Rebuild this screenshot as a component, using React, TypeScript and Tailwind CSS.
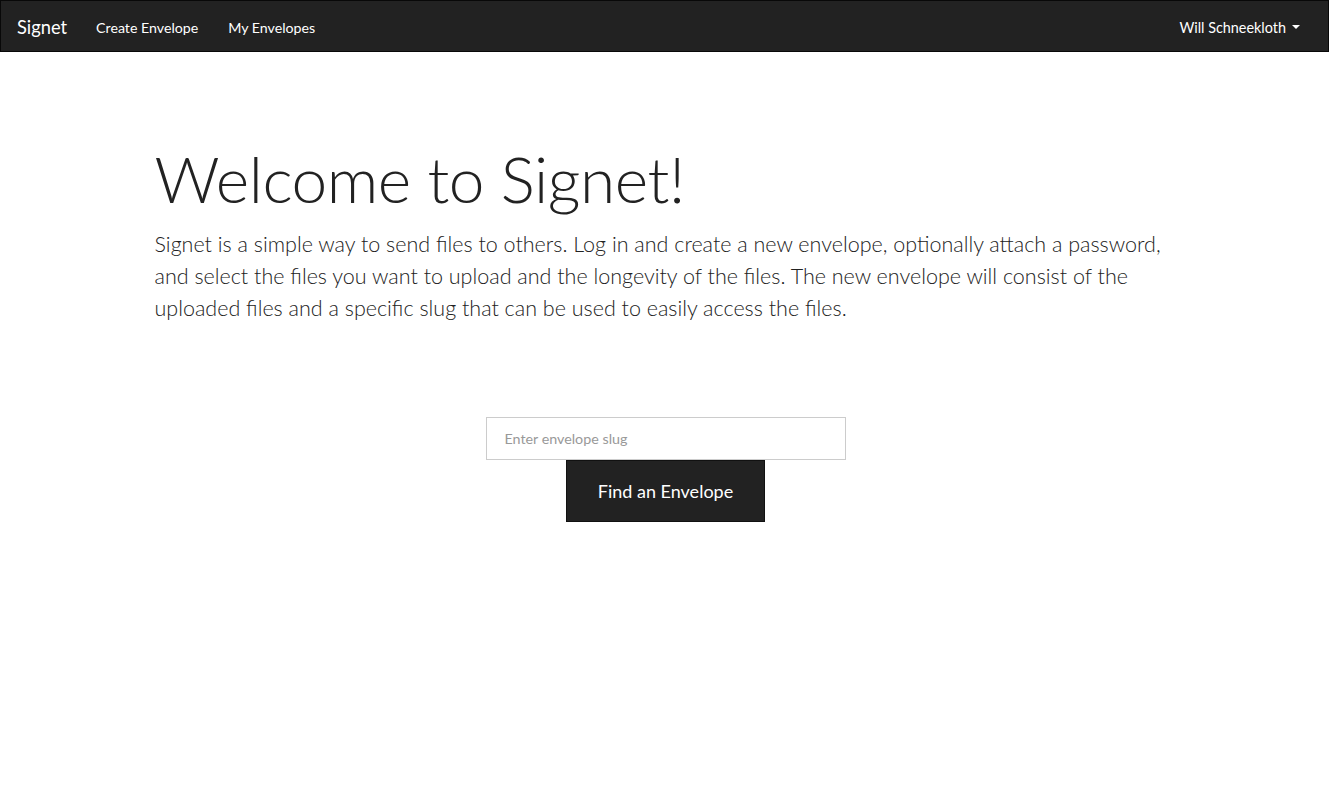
import React from "react";

const font = { fontFamily: "Lato, 'Open Sans', sans-serif" };

function Navbar() {
  return (
    <nav className="h-[52px] bg-[#222] border border-[#080808] flex items-center justify-between text-white">
      <div className="flex items-center h-full pt-[3px]">
        <a className="pl-[16px] pr-[14px] text-[18.3px] text-white">Signet</a>
        <a className="px-[15px] text-[14.2px] text-white">Create Envelope</a>
        <a className="px-[15px] text-[14.2px] text-white">My Envelopes</a>
      </div>
      <div className="flex items-center pt-[3px] pr-[28px] text-[14.4px]">
        <span>Will Schneekloth</span>
        <span className="ml-[6px] w-0 h-0 border-l-[4px] border-r-[4px] border-t-[4px] border-l-transparent border-r-transparent border-t-white" />
      </div>
    </nav>
  );
}

export default function App() {
  return (
    <div className="min-h-[807px] bg-white text-[#222]" style={font}>
      <Navbar />
      <main className="w-[1170px] mx-auto px-[15px]">
        <div className="px-[60px] pt-[92px]">
          <h1 className="text-[64px] font-light leading-[1.1] tracking-[-0.5px]">Welcome to Signet!</h1>
          <p className="mt-[14px] text-[21.5px] font-light leading-[32px]">
            Signet is a simple way to send files to others. Log in and create a new envelope, optionally attach a password,
            <br />
            and select the files you want to upload and the longevity of the files. The new envelope will consist of the
            <br />
            uploaded files and a specific slug that can be used to easily access the files.
          </p>
        </div>
        <div className="flex flex-col items-center mt-[93px] pl-[2px]">
          <input
            className="w-[360px] h-[43px] border border-[#ccc] px-[18px] text-[14.3px] text-[#555] placeholder:text-[#999] outline-none"
            placeholder="Enter envelope slug"
          />
          <button className="w-[199px] h-[62px] bg-[#222] border border-[#111] text-white text-[18px]">
            Find an Envelope
          </button>
        </div>
      </main>
    </div>
  );
}
